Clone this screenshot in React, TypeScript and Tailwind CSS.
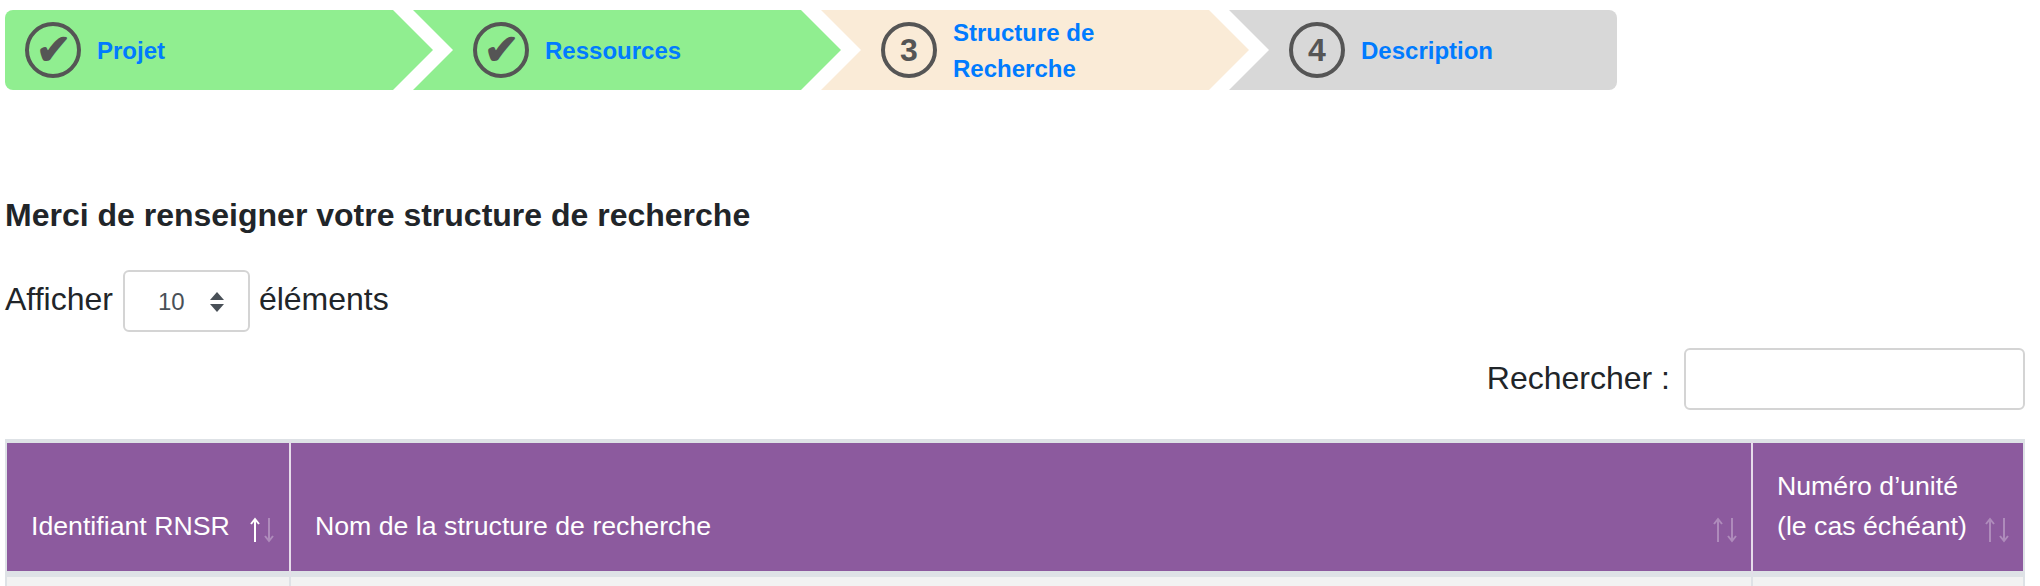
import React from 'react';

interface Step {
  label: string[];
  mark: string;
  done: boolean;
  bg: string;
  shape: string;
}

const steps: Step[] = [
  { label: ['Projet'], mark: '✔', done: true, bg: 'bg-[#90ee90]', shape: 'rounded-l-lg [clip-path:polygon(0_0,calc(100%-40px)_0,100%_50%,calc(100%-40px)_100%,0_100%)]' },
  { label: ['Ressources'], mark: '✔', done: true, bg: 'bg-[#90ee90]', shape: '[clip-path:polygon(0_0,calc(100%-40px)_0,100%_50%,calc(100%-40px)_100%,0_100%,40px_50%)]' },
  { label: ['Structure de', 'Recherche'], mark: '3', done: false, bg: 'bg-[#faebd7]', shape: '[clip-path:polygon(0_0,calc(100%-40px)_0,100%_50%,calc(100%-40px)_100%,0_100%,40px_50%)]' },
  { label: ['Description'], mark: '4', done: false, bg: 'bg-[#d8d8d8]', shape: 'rounded-r-lg [clip-path:polygon(0_0,100%_0,100%_100%,0_100%,40px_50%)]' },
];

const SortArrows = ({ active }: { active?: boolean }) => (
  <svg width="24" height="26" viewBox="0 0 24 26" fill="none" stroke="white" strokeWidth="2" className="mb-[3px] shrink-0">
    <path d="M5 25V2M1 7l4-5 4 5" opacity={active ? 1 : 0.3} />
    <path d="M19 1v23M15 19l4 5 4-5" opacity="0.3" />
  </svg>
);

export default function App() {
  return (
    <div className="h-[586px] overflow-hidden bg-white pl-[5px] pr-[15px] pt-[10px] font-['Liberation_Sans',Arial,sans-serif] text-[32px] text-[#212529]">
      <div className="flex h-[80px]">
        {steps.map((step, i) => (
          <div
            key={i}
            className={`flex items-center ${step.bg} ${step.shape} ${i === 0 ? 'w-[428px] pl-[20px]' : i === 3 ? 'w-[388px] pl-[60px] -ml-[20px]' : 'w-[428px] pl-[60px] -ml-[20px]'}`}
          >
            <span className={`flex h-[56px] w-[56px] shrink-0 items-center justify-center rounded-full border-[4px] border-[#555555] font-bold leading-none text-[#555555] ${step.done ? 'text-[42px]' : 'text-[32px]'}`}>
              {step.mark}
            </span>
            <span className="ml-[16px] pt-[1px] text-[24px] font-bold leading-[36px] text-[#007bff]">
              {step.label.map(line => <span key={line} className="block">{line}</span>)}
            </span>
          </div>
        ))}
      </div>

      <h5 className="mt-[107px] text-[32px] font-bold leading-[36px]">Merci de renseigner votre structure de recherche</h5>

      <div className="mt-[37px] flex h-[62px] items-center">
        <span className="pb-[4px]">Afficher</span>
        <span className="ml-[10px] flex h-[62px] w-[127px] items-center justify-between rounded-md border-2 border-[#d4d4d4] pl-[33px] pr-[23px] pt-[1px] text-[24px] text-[#495057]">
          10
          <svg width="16" height="22" viewBox="0 0 16 22" fill="#495057"><path d="M8 1 15 9H1zM8 21 1 13h14z" /></svg>
        </span>
        <span className="ml-[9px] pb-[4px]">éléments</span>
      </div>

      <div className="mt-[16px] flex h-[62px] items-center justify-end">
        <span className="pb-[2px]">Rechercher :</span>
        <span className="ml-[14px] h-[62px] w-[341px] rounded-md border-2 border-[#d4d4d4]" />
      </div>

      <table className="mt-[29px] w-full table-fixed border-separate border-spacing-0 text-[26.7px] text-white">
        <colgroup>
          <col className="w-[286px]" />
          <col />
          <col className="w-[272px]" />
        </colgroup>
        <thead>
          <tr className="h-[138px] bg-[#8c5a9e]">
            <th className="border-t-4 border-b-[6px] border-l-2 border-r-2 border-t-[#dee2e6] border-b-[#dee2e6] border-l-[#dee2e6] border-r-[#e6dcea] pb-[25px] pl-[24px] pr-[15px] align-bottom font-normal">
              <div className="flex items-end justify-between">
                <span className="whitespace-nowrap">Identifiant RNSR</span>
                <SortArrows active />
              </div>
            </th>
            <th className="border-t-4 border-b-[6px] border-r-2 border-t-[#dee2e6] border-b-[#dee2e6] border-r-[#e6dcea] pb-[25px] pl-[24px] pr-[14px] align-bottom font-normal">
              <div className="flex items-end justify-between">
                <span>Nom de la structure de recherche</span>
                <SortArrows />
              </div>
            </th>
            <th className="border-t-4 border-b-[6px] border-r-2 border-[#dee2e6] pb-[25px] pl-[24px] pr-[14px] align-bottom font-normal">
              <div className="flex items-end justify-between text-left leading-[40px]">
                <span className="whitespace-nowrap">Numéro d’unité<br />(le cas échéant)</span>
                <SortArrows />
              </div>
            </th>
          </tr>
        </thead>
        <tbody>
          <tr className="h-[60px] bg-[#f2f2f2]">
            <td className="border-l-2 border-r-2 border-[#dee2e6]" />
            <td className="border-r-2 border-[#dee2e6]" />
            <td className="border-r-2 border-[#dee2e6]" />
          </tr>
        </tbody>
      </table>
    </div>
  );
}
